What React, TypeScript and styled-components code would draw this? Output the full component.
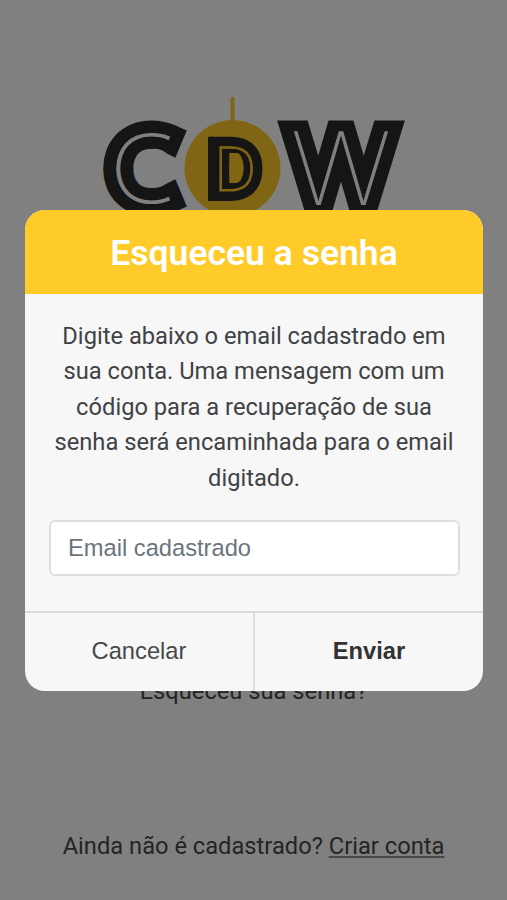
import React from "react";
import styled, { createGlobalStyle, css } from "styled-components";

const GlobalStyle = createGlobalStyle`
  *, *::before, *::after { box-sizing: border-box; }
  body {
    margin: 0;
    background: #808080;
    font-family: Roboto, "Liberation Sans", sans-serif;
    color: #242424;
  }
`;

const Page = styled.main`
  display: flex;
  flex-direction: column;
  align-items: center;
  justify-content: space-between;
  height: 900px;
  padding: 90px 0 36px;
  overflow: hidden;
`;

const Logo = styled.svg`
  display: block;
  width: 320px;
  height: 130px;
  flex: none;
  opacity: 0.999;
`;

const Links = styled.div`
  display: flex;
  flex-direction: column;
  align-items: center;
  gap: 119px;
  font-size: 23.7px;
  line-height: 36px;
  white-space: nowrap;
`;

const ForgotLink = styled.span``;

const SignUp = styled.p`
  margin: 0;
`;

const UnderlinedLink = styled.span`
  text-decoration: underline;
  text-decoration-color: #484848;
  text-decoration-thickness: 2px;
  text-underline-offset: 2px;
`;

const Overlay = styled.div`
  position: absolute;
  top: 0;
  left: 0;
  width: 507px;
  height: 900px;
  display: flex;
  align-items: center;
  justify-content: center;
`;

const Dialog = styled.section`
  display: flex;
  flex-direction: column;
  width: 458px;
  height: 481px;
  margin-top: 1px;
  margin-left: 1px;
  border-radius: 20px;
  overflow: hidden;
  background: #f7f7f7;
`;

const DialogTitle = styled.h1`
  display: flex;
  align-items: center;
  justify-content: center;
  flex: none;
  height: 84px;
  margin: 0;
  padding-top: 2px;
  background: #ffcb29;
  color: #fff;
  font-size: 35.5px;
  font-weight: 600;
  line-height: 48px;
`;

const DialogBody = styled.div`
  flex: 1;
  padding: 24.6px 24px 0;
`;

const Message = styled.p`
  margin: 0 -4px 23.9px;
  color: #404244;
  font-size: 23.7px;
  line-height: 35.5px;
  text-align: center;
`;

const EmailInput = styled.input`
  display: block;
  width: 411px;
  height: 56px;
  padding: 1px 17px 0;
  border: 2px solid #dedede;
  border-radius: 6px;
  background: #fff;
  font-family: "Liberation Sans", Arial, sans-serif;
  font-size: 23.7px;

  &::placeholder {
    color: #6c757d;
    opacity: 1;
  }
`;

const Actions = styled.div`
  display: grid;
  grid-template-columns: 230px 1fr;
  flex: none;
  height: 80px;
  border-top: 2px solid #dadada;
`;

const ActionButton = styled.button<{ $primary?: boolean }>`
  padding: 0 0 1px;
  border: 0;
  background: transparent;
  color: #48494a;
  font-family: "Liberation Sans", Arial, sans-serif;
  font-size: 23.7px;
  ${({ $primary }) =>
    $primary
      ? css`
          color: #303234;
          font-weight: 700;
        `
      : css`
          border-right: 2px solid #dfdfdf;
        `}
`;

interface InlineLetterProps {
  char: string;
  transform: string;
  family: string;
  size: number;
  weight: number;
  inline: string;
  inlineWidth: number;
  anchor?: "start" | "middle";
}

/* A hairline letter drawn over a heavy outline of itself.
   The tiny rotation keeps the glyph edges unhinted, so fill and outline line up. */
function InlineLetter({
  char, transform, family, size, weight, inline, inlineWidth, anchor = "start",
}: InlineLetterProps) {
  return (
    <g
      transform={`${transform} rotate(0.05)`}
      fontFamily={`${family}, sans-serif`}
      fontWeight={100}
      fontSize={size}
      textAnchor={anchor}
      textRendering="geometricPrecision"
      strokeMiterlimit={8}
    >
      <text fill="#151515" stroke="#151515" strokeWidth={weight}>{char}</text>
      <text fill={inline} stroke={inline} strokeWidth={inlineWidth}>{char}</text>
    </g>
  );
}

const letterC = {
  char: "C", family: "'Noto Sans'", size: 96, weight: 26, inline: "#808080", inlineWidth: 1.2,
};

function CdwLogo() {
  return (
    <Logo viewBox="93.5 90 320 130" role="img" aria-label="CDW">
      <clipPath id="caps"><rect x="94" y="120.5" width="320" height="100" /></clipPath>
      <clipPath id="upper"><rect x="94" y="90" width="110" height="79" /></clipPath>
      <clipPath id="lower"><rect x="94" y="168" width="110" height="60" /></clipPath>
      <rect x="230" y="97" width="4" height="30" rx="1.5" fill="#806614" />
      <circle cx="232" cy="168" r="48" fill="#806614" />
      <g clipPath="url(#upper)">
        <InlineLetter {...letterC} transform="translate(110 203) scale(1.05 1)" />
      </g>
      <g clipPath="url(#lower)">
        <InlineLetter {...letterC} transform="translate(110 134) scale(1.05 -1)" />
      </g>
      <circle cx="153.6" cy="168.3" r="19.5" fill="#808080" />
      <g clipPath="url(#caps)">
        <InlineLetter
          char="W" transform="translate(340.5 204.5) scale(1.075 1)" family="Inter" size={100}
          weight={25} inline="#808080" inlineWidth={0.9} anchor="middle"
        />
      </g>
      <rect x="207.5" y="136.8" width="6" height="64.2" fill="#151515" />
      <InlineLetter
        char="D" transform="translate(213 191)" family="'Noto Sans'" size={62}
        weight={20} inline="#806614" inlineWidth={0.9}
      />
      <rect x="228.8" y="153" width="7.5" height="30" fill="#806614" />
      <ellipse cx="236" cy="168" rx="7.2" ry="15" fill="#806614" />
    </Logo>
  );
}

export default function App() {
  return (
    <>
      <GlobalStyle />
      <Page>
        <CdwLogo />
        <Links>
          <ForgotLink>Esqueceu sua senha?</ForgotLink>
          <SignUp>
            Ainda não é cadastrado? <UnderlinedLink>Criar conta</UnderlinedLink>
          </SignUp>
        </Links>
      </Page>
      <Overlay>
        <Dialog role="dialog" aria-modal="true">
          <DialogTitle>Esqueceu a senha</DialogTitle>
          <DialogBody>
            <Message>
              Digite abaixo o email cadastrado em sua conta. Uma mensagem com um código para a
              recuperação de sua senha será encaminhada para o email digitado.
            </Message>
            <EmailInput type="email" placeholder="Email cadastrado" />
          </DialogBody>
          <Actions>
            <ActionButton>Cancelar</ActionButton>
            <ActionButton $primary>Enviar</ActionButton>
          </Actions>
        </Dialog>
      </Overlay>
    </>
  );
}
